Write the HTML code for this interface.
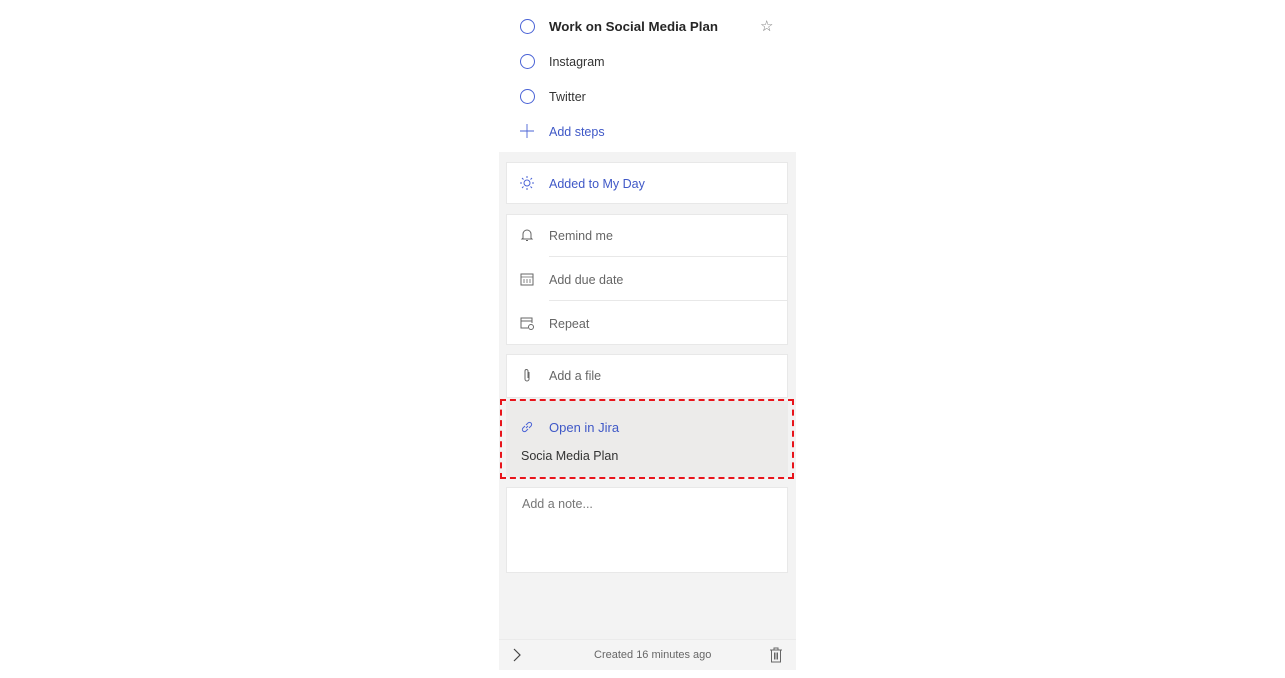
<!DOCTYPE html>
<html><head><meta charset="utf-8"><style>
*{margin:0;padding:0;box-sizing:border-box}
body{width:1285px;height:678px;background:#fff;font-family:"Liberation Sans",sans-serif;position:relative;overflow:hidden}
.abs{position:absolute}
.panel{left:499px;top:0;width:297px;height:670px;background:#f3f3f3}
.top{left:499px;top:0;width:297px;height:152px;background:#fff}
.t{position:absolute;font-size:12.5px;color:#333;white-space:nowrap}
.blue{color:#3f58c7}
.card{position:absolute;left:506px;width:282px;background:#fff;border:1px solid #e8e8e8}
.circ{position:absolute;width:15px;height:15px;border:1.3px solid #4a63d6;border-radius:50%}
.gray{color:#666}
</style></head><body>
<div class="abs panel"></div>
<div class="abs top"></div>
<div class="circ" style="left:520px;top:19px"></div>
<div class="t" style="left:549px;top:19px;font-size:13.3px;font-weight:bold;color:#262626">Work on Social Media Plan</div>
<div class="t" style="left:760px;top:17px;font-size:15px;color:#777">☆</div>
<div class="circ" style="left:520px;top:54px"></div>
<div class="t" style="left:549px;top:55px">Instagram</div>
<div class="circ" style="left:520px;top:89px"></div>
<div class="t" style="left:549px;top:90px">Twitter</div>
<svg class="abs" style="left:519px;top:123px" width="16" height="16"><path d="M8 1v14M1 8h14" stroke="#4a63d6" stroke-width="0.9"/></svg>
<div class="t blue" style="left:549px;top:125px">Add steps</div>

<div class="card" style="top:162px;height:42px"></div>
<svg class="abs" style="left:519px;top:175px" width="16" height="16" fill="none" stroke="#4a63d6" stroke-width="1"><circle cx="8" cy="8" r="3"/><path d="M8 1v2M8 13v2M1 8h2M13 8h2M3 3l1.5 1.5M11.5 11.5L13 13M3 13l1.5-1.5M11.5 4.5L13 3"/></svg>
<div class="t blue" style="left:549px;top:177px">Added to My Day</div>

<div class="card" style="top:214px;height:131px"></div>
<div class="abs" style="left:549px;top:256px;width:239px;height:1px;background:#e8e8e8"></div>
<div class="abs" style="left:549px;top:300px;width:239px;height:1px;background:#e8e8e8"></div>
<svg class="abs" style="left:520px;top:228px" width="14" height="14" fill="none" stroke="#666" stroke-width="1"><path d="M3 10V6a4 4 0 018 0v4l1 1H2zM6 12.5h2"/></svg>
<div class="t gray" style="left:549px;top:229px">Remind me</div>
<svg class="abs" style="left:520px;top:272px" width="14" height="14" fill="none" stroke="#666" stroke-width="1"><rect x="1" y="2" width="12" height="11"/><path d="M1 5h12M4 7v4M7 7v4M10 7v4" stroke-width=".8"/></svg>
<div class="t gray" style="left:549px;top:273px">Add due date</div>
<svg class="abs" style="left:520px;top:316px" width="15" height="15" fill="none" stroke="#666" stroke-width="1"><path d="M8 12H1V2h11v5M1 5h11"/><circle cx="11" cy="11" r="2.5"/></svg>
<div class="t gray" style="left:549px;top:317px">Repeat</div>

<div class="card" style="top:354px;height:44px"></div>
<svg class="abs" style="left:521px;top:368px" width="12" height="15" fill="none" stroke="#666" stroke-width="1"><path d="M8 4v7a2 2 0 01-4 0V3a1.5 1.5 0 013 0v7"/></svg>
<div class="t gray" style="left:549px;top:369px">Add a file</div>

<div class="abs" style="left:506px;top:401px;width:282px;height:76px;background:#ecebea"></div>
<div class="abs" style="left:500px;top:399px;width:294px;height:80px;border:2px dashed #e8141b"></div>
<svg class="abs" style="left:520px;top:420px" width="14" height="14" fill="none" stroke="#4a63d6" stroke-width="1"><path d="M6 8l2-2M5 6L3 8a2 2 0 003 3l2-2M9 8l2-2a2 2 0 00-3-3L6 5"/></svg>
<div class="t blue" style="left:549px;top:420px;font-size:13px">Open in Jira</div>
<div class="t" style="left:521px;top:449px;color:#333">Socia Media Plan</div>

<div class="card" style="top:487px;height:86px"></div>
<div class="t" style="left:522px;top:497px;color:#777">Add a note...</div>

<div class="abs" style="left:499px;top:639px;width:297px;height:31px;background:#f4f4f4;border-top:1px solid #ebebeb"></div>
<svg class="abs" style="left:512px;top:648px" width="10" height="14" fill="none" stroke="#444" stroke-width="1.2"><path d="M2 1l6 6-6 6"/></svg>
<div class="t" style="left:594px;top:649px;font-size:11px;color:#666">Created 16 minutes ago</div>
<svg class="abs" style="left:769px;top:647px" width="14" height="16" fill="none" stroke="#666" stroke-width="1"><path d="M1 3h12M5 3V1h4v2M2.5 3v12h9V3M5.5 5.5v7M7 5.5v7M8.5 5.5v7"/></svg>
</body></html>
